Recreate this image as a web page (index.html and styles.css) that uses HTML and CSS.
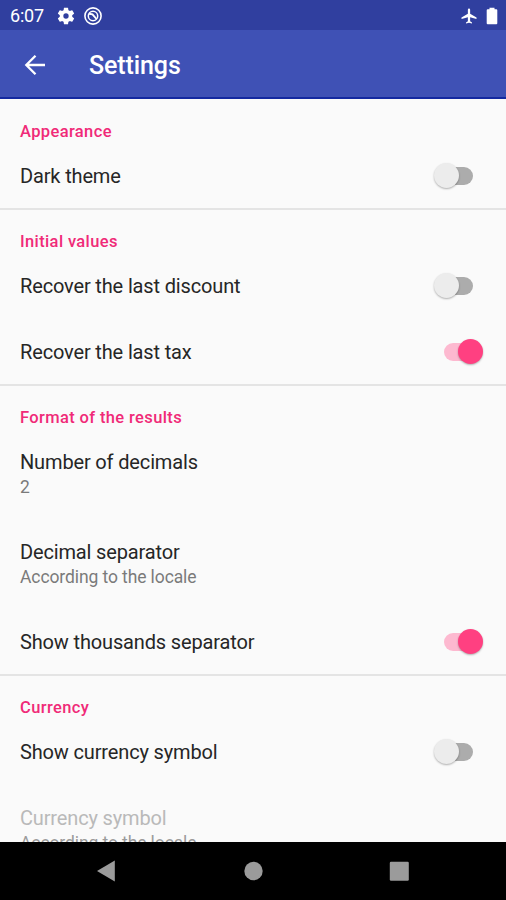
FILE: index.html
```html
<!DOCTYPE html>
<html lang="en">
<head>
<meta charset="utf-8">
<title>Settings</title>
<link rel="stylesheet" href="styles.css">
</head>
<body>
<div class="screen">
  <div class="status">
    <span class="clock">6:07</span>
    <svg class="gear" width="20" height="20" viewBox="0 0 24 24"><path fill="#fff" d="M19.43 12.98c.04-.32.07-.64.07-.98s-.03-.66-.07-.98l2.11-1.65c.19-.15.24-.42.12-.64l-2-3.46c-.12-.22-.39-.3-.61-.22l-2.49 1c-.52-.4-1.08-.73-1.69-.98l-.38-2.65A.488.488 0 0 0 14 2h-4c-.25 0-.46.18-.49.42l-.38 2.65c-.61.25-1.17.59-1.69.98l-2.49-1c-.23-.09-.49 0-.61.22l-2 3.46c-.13.22-.07.49.12.64l2.11 1.65c-.04.32-.07.65-.07.98s.03.66.07.98l-2.11 1.65c-.19.15-.24.42-.12.64l2 3.46c.12.22.39.3.61.22l2.49-1c.52.4 1.08.73 1.69.98l.38 2.65c.03.24.24.42.49.42h4c.25 0 .46-.18.49-.42l.38-2.65c.61-.25 1.17-.59 1.69-.98l2.49 1c.23.09.49 0 .61-.22l2-3.46c.12-.22.07-.49-.12-.64zM12 15.2a3.2 3.2 0 1 1 0-6.4 3.2 3.2 0 0 1 0 6.400z"/></svg>
    <svg class="sync" width="20" height="20" viewBox="0 0 20 20" fill="none" stroke="#fff"><circle cx="10" cy="10" r="8.100" stroke-width="1.600"/><circle cx="10" cy="10" r="4.700" stroke-width="1.500"/><path stroke-width="1.900" d="M6 7.800 9.500 8.300 13.500 13"/></svg>
    <svg class="plane" width="18" height="18" viewBox="0 0 24 24"><path fill="#fff" d="M22 16v-2l-8.500-5V3.500a1.500 1.500 0 0 0-3 0V9L2 14v2l8.500-2.500V19L8 20.500V22l4-1 4 1v-1.500L13.500 19v-5.500z"/></svg>
    <svg class="battery" width="12" height="18" viewBox="0 0 12 18"><path fill="#fff" d="M3.500 .7h5v1.500H10.300q1 0 1 1V16.200q0 1-1 1H1.700q-1 0-1-1V3.200q0-1 1-1h1.800z"/></svg>
  </div>
  <header class="bar">
    <svg class="back" width="24" height="24" viewBox="0 0 24 24" fill="none" stroke="#fff" stroke-width="2.300"><path d="M22 12H3.500M12.500 2.800 3.300 12l9.200 9.200"/></svg>
    <h1>Settings</h1>
  </header>
  <main>
    <section>
      <h2>Appearance</h2>
      <div class="row"><span class="label">Dark theme</span><span class="switch"></span></div>
    </section>
    <section>
      <h2>Initial values</h2>
      <div class="row"><span class="label">Recover the last discount</span><span class="switch"></span></div>
      <div class="row"><span class="label">Recover the last tax</span><span class="switch on"></span></div>
    </section>
    <section>
      <h2>Format of the results</h2>
      <div class="row tall"><span class="label">Number of decimals</span><span class="sub">2</span></div>
      <div class="row tall"><span class="label">Decimal separator</span><span class="sub">According to the locale</span></div>
      <div class="row"><span class="label">Show thousands separator</span><span class="switch on"></span></div>
    </section>
    <section>
      <h2>Currency</h2>
      <div class="row"><span class="label">Show currency symbol</span><span class="switch"></span></div>
      <div class="row tall disabled"><span class="label">Currency symbol</span><span class="sub">According to the locale</span></div>
    </section>
  </main>
  <nav>
    <svg width="506" height="58" viewBox="0 0 506 58" fill="#9b9b9b"><path d="M97 29 114.800 18.500v21z"/><circle cx="253.500" cy="29" r="9.200"/><rect x="389.800" y="19.800" width="19" height="19" rx="1.200"/></svg>
  </nav>
</div>
</body>
</html>
```
FILE: styles.css
```css
* { box-sizing: border-box; }
body { margin: 0; font-family: Roboto, "Liberation Sans", sans-serif; }
.screen { width: 506px; height: 900px; display: flex; flex-direction: column; overflow: hidden; background: #fafafa; }
.status { height: 30px; flex: none; display: flex; align-items: center; padding: 1px 8px 0 10px; background: #303f9f; color: #fff; }
.clock { width: 46px; font-size: 18px; line-height: 30px; letter-spacing: -.2px; }
.sync { margin-left: 7px; }
.plane { margin-left: auto; }
.battery { margin-left: 8px; }
.bar { height: 69px; flex: none; display: flex; align-items: center; padding: 2px 0 0 23px; background: #3f51b5; border-bottom: 2px solid #1429a0; color: #fff; }
h1 { margin: 3px 0 0 42px; font-size: 25px; font-weight: 500; line-height: 32px; letter-spacing: -.1px; }
main { flex: 1; min-height: 0; overflow: hidden; }
section { border-bottom: 2px solid #e4e4e4; }
section:last-child { border-bottom: 0; }
h2 { margin: 0; height: 44px; padding: 22px 20px 0; font-size: 16.500px; line-height: 22px; font-weight: 500; color: #f02a78; letter-spacing: .37px; }
section + section h2 { height: 42px; padding-top: 21px; }
.row { height: 66px; display: flex; align-items: center; justify-content: space-between; padding: 1px 23px 0 20px; }
section .row:last-child { height: 66px; }
section:first-child .row { height: 65px; }
.label { font-size: 20px; line-height: 26px; color: #262626; letter-spacing: -.15px; }
section .row.tall { height: 90px; flex-direction: column; align-items: flex-start; justify-content: flex-start; padding-top: 21px; }
.sub { font-size: 17.500px; line-height: 24px; color: #7a7a7a; letter-spacing: -.1px; }
.disabled .label { color: #b9b9b9; }
.disabled .sub { color: #9b9b9b; }
.switch { position: relative; width: 50px; height: 26px; }
.switch::before { content: ""; position: absolute; left: 11px; top: 4px; width: 29px; height: 18px; border-radius: 9px; background: #acacac; }
.switch::after { content: ""; position: absolute; left: 1px; top: 0; width: 25px; height: 25px; border-radius: 50%; background: #ececec; box-shadow: 0 1px 2px rgba(0, 0, 0, .3); }
.switch.on::before { background: #fdb9d0; }
.switch.on::after { left: 25px; background: #ff4081; }
nav { height: 58px; flex: none; background: #000; }
nav svg { display: block; }
```
